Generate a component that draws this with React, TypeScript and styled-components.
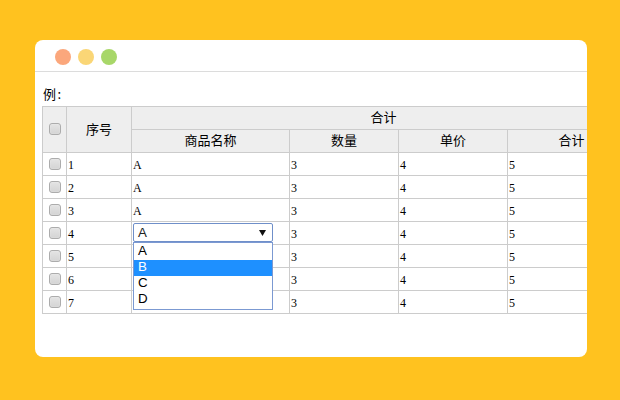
import React from "react";
import styled, { createGlobalStyle } from "styled-components";

const Global = createGlobalStyle`
  html, body { margin: 0; padding: 0; background: #ffc21f; }
`;

const Page = styled.div`
  width: 620px;
  height: 400px;
  padding: 40px 33px 43px 35px;
  box-sizing: border-box;
  background: #ffc21f;
`;

const Card = styled.div`
  height: 317px;
  background: #fff;
  border-radius: 8px;
  overflow: hidden;
`;

const TitleBar = styled.div`
  height: 32px;
  box-sizing: border-box;
  border-bottom: 1px solid #dcdcdc;
  display: flex;
  align-items: center;
  gap: 7px;
  padding: 3px 0 0 20px;
`;

const Dot = styled.span<{ $color: string }>`
  width: 16px;
  height: 16px;
  border-radius: 50%;
  background: ${(p) => p.$color};
`;

const Content = styled.div`
  padding: 15px 0 0 7px;
`;

const Caption = styled.div`
  font: 13px/14px "Noto Sans CJK SC", "Liberation Sans", sans-serif;
  color: #000;
  height: 19px;
  padding-left: 1px;
  box-sizing: border-box;
  letter-spacing: 1.5px;
`;

const Table = styled.table`
  border-collapse: collapse;
  table-layout: fixed;
  width: 593px;
  font-family: "Liberation Serif", "Noto Sans CJK SC", serif;
  font-size: 12px;
  color: #000;
`;

const HeadCell = styled.th`
  background: #eeeeee;
  border: 1px solid #cccccc;
  box-sizing: border-box;
  height: 23px;
  padding: 0 1px 2px;
  font: 400 13px/18px "Noto Sans CJK SC", sans-serif;
  text-align: center;
`;

const Cell = styled.td<{ $center?: boolean }>`
  border: 1px solid #cccccc;
  box-sizing: border-box;
  height: 23px;
  padding: ${(p) => (p.$center ? "0 1px" : "2px 1px 0")};
  text-align: left;
  position: relative;
  line-height: 14px;
`;

const Check = styled.span`
  display: block;
  width: 10px;
  height: 10px;
  margin-left: 5px;
  border: 1px solid #acacac;
  border-radius: 3px;
  background: linear-gradient(#e4e4e4, #d4d4d4);
  box-shadow: inset 0 0 1px #fff;
`;

const Select = styled.div`
  position: absolute;
  left: 1px;
  top: 1px;
  width: 140px;
  z-index: 2;
  font: 13.33px/14px "Liberation Sans", Arial, sans-serif;
`;

const Trigger = styled.div`
  height: 19px;
  box-sizing: border-box;
  border: 1px solid #6f8fc9;
  border-radius: 2px;
  padding: 0 6px 0 4px;
  background: #fff;
  display: flex;
  align-items: center;
  justify-content: space-between;
  color: #222;
`;

const List = styled.div`
  box-sizing: border-box;
  height: 68px;
  border: 1px solid #7b99d2;
  padding: 1px 0;
  background: #fff;
`;

const Option = styled.div<{ $active?: boolean }>`
  height: 16px;
  padding-left: 4px;
  background: ${(p) => (p.$active ? "#1e90ff" : "transparent")};
  color: ${(p) => (p.$active ? "#fff" : "#000")};
`;

const widths = [24, 65, 158, 109, 109, 128];
const rows = [1, 2, 3, 4, 5, 6, 7];

export default function App() {
  return (
    <Page>
      <Global />
      <Card>
        <TitleBar>
          <Dot $color="#fba77c" />
          <Dot $color="#fad676" />
          <Dot $color="#a8d769" />
        </TitleBar>
        <Content>
          <Caption>例:</Caption>
          <Table>
            <colgroup>
              {widths.map((w, i) => (
                <col key={i} width={w} />
              ))}
            </colgroup>
            <thead>
              <tr>
                <HeadCell rowSpan={2}>
                  <Check />
                </HeadCell>
                <HeadCell rowSpan={2}>序号</HeadCell>
                <HeadCell colSpan={4}>合计</HeadCell>
              </tr>
              <tr>
                <HeadCell>商品名称</HeadCell>
                <HeadCell>数量</HeadCell>
                <HeadCell>单价</HeadCell>
                <HeadCell>合计</HeadCell>
              </tr>
            </thead>
            <tbody>
              {rows.map((n) => (
                <tr key={n}>
                  <Cell $center>
                    <Check />
                  </Cell>
                  <Cell>{n}</Cell>
                  <Cell>
                    {n === 4 && (
                      <Select>
                        <Trigger>
                          A
                          <svg width="7" height="6" viewBox="0 0 7 6">
                            <path d="M0 0h7L3.5 6z" fill="#111" />
                          </svg>
                        </Trigger>
                        <List>
                          <Option>A</Option>
                          <Option $active>B</Option>
                          <Option>C</Option>
                          <Option>D</Option>
                        </List>
                      </Select>
                    )}
                    {n < 4 && "A"}
                  </Cell>
                  <Cell>3</Cell>
                  <Cell>4</Cell>
                  <Cell>5</Cell>
                </tr>
              ))}
            </tbody>
          </Table>
        </Content>
      </Card>
    </Page>
  );
}
